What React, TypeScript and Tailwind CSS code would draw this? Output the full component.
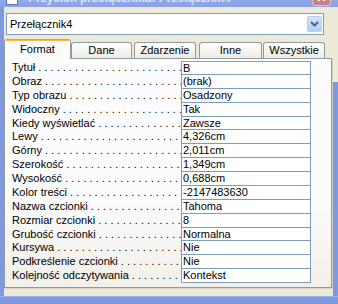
const rows: [string, string][] = [
  ["Tytuł", "B"],
  ["Obraz", "(brak)"],
  ["Typ obrazu", "Osadzony"],
  ["Widoczny", "Tak"],
  ["Kiedy wyświetlać", "Zawsze"],
  ["Lewy", "4,326cm"],
  ["Górny", "2,011cm"],
  ["Szerokość", "1,349cm"],
  ["Wysokość", "0,688cm"],
  ["Kolor treści", "-2147483630"],
  ["Nazwa czcionki", "Tahoma"],
  ["Rozmiar czcionki", "8"],
  ["Grubość czcionki", "Normalna"],
  ["Kursywa", "Nie"],
  ["Podkreślenie czcionki", "Nie"],
  ["Kolejność odczytywania", "Kontekst"],
];

const dots = " . . . . . . . . . . . . . . . . . . . . . . . . . . . . . . . .";

const tabs = [
  { name: "Dane", cls: "w-[61px]" },
  { name: "Zdarzenie", cls: "w-[62px] ml-[2px]" },
  { name: "Inne", cls: "w-[63px] ml-[3px]" },
  { name: "Wszystkie", cls: "w-[62px] ml-[1px]" },
];

export default function App() {
  return (
    <div className="w-[338px] h-[304px] overflow-hidden flex flex-col bg-[#7f99e0] font-['Liberation_Sans',Arial,sans-serif] text-[11px] text-black">
      {/* title bar, mostly scrolled off the top */}
      <div className="h-[22px] mt-[-15px] shrink-0 flex items-center pt-[4px] pl-[6px] pr-[7px] bg-gradient-to-b from-[#9fb4ec] to-[#8aa3e6]">
        <div className="w-[12px] h-[13px] bg-white border border-[#5a74b8] shrink-0" />
        <span className="ml-[10px] text-[12px] font-bold text-[#dbe5f8] whitespace-nowrap">
          Przycisk przełącznika: Przełącznik4
        </span>
        <div className="ml-auto w-[19px] h-[19px] mb-[3px] rounded-[3px] bg-[#c98484] border border-[#e6c2c2] flex items-center justify-center text-white text-[12px] font-bold">
          X
        </div>
      </div>

      <div className="flex flex-1 min-h-0">
        <div className="w-[4px] bg-[#7f99e0]" />
        <div className="w-[329px] bg-[#ece9d8] flex flex-col pt-[6px]">
          {/* object selector */}
          <div className="ml-[2px] w-[318px] h-[22px] border border-[#7f9db9] bg-white flex items-center pl-[3px] pr-[1px]">
            <span className="flex-1">Przełącznik4</span>
            <div className="w-[15px] h-[16px] rounded-[2px] border border-[#b9cdf6] bg-gradient-to-b from-[#d6e2fc] to-[#b6cbf6] flex items-center justify-center">
              <svg width="9" height="6" viewBox="0 0 9 6">
                <path d="M1 1 L4.5 4.5 L8 1" fill="none" stroke="#4d6185" strokeWidth="2" />
              </svg>
            </div>
          </div>

          {/* tabs */}
          <div className="mt-[4px] h-[19px] flex items-end">
            <div className="relative z-10 w-[67px] h-[20px] mb-[-1px] flex flex-col rounded-t-[3px] border-x border-[#919b9c] bg-[#fcfcfe] overflow-hidden">
              <div className="h-[2px] bg-gradient-to-b from-[#e68b2c] to-[#ffc73c]" />
              <div className="flex-1 flex items-center justify-center pb-[2px]">Format</div>
            </div>
            {tabs.map((t) => (
              <div
                key={t.name}
                className={`${t.cls} h-[16px] rounded-t-[3px] border-t border-x border-[#919b9c] bg-gradient-to-b from-white to-[#ecebe6] flex items-center justify-center`}
              >
                {t.name}
              </div>
            ))}
          </div>

          {/* property list */}
          <div className="w-[328px] h-[230px] border border-[#919b9c] bg-gradient-to-b from-[#fcfcfe] from-60% to-[#f1efe8] pt-[2px] shadow-[1px_1px_0_#d6d3c4]">
            {rows.map(([label, value], i) => (
              <div key={label} className="flex h-[13.875px]">
                <div className="w-[176px] pl-[7px] overflow-hidden whitespace-nowrap leading-[13px]">
                  {label}
                  {dots}
                </div>
                <div
                  className={`w-[130px] bg-white border-x border-b border-[#7f9db9] pl-[1px] leading-[12px] whitespace-nowrap ${
                    i === 0 ? "border-t" : ""
                  }`}
                >
                  {value}
                </div>
              </div>
            ))}
          </div>
        </div>
        <div className="flex-1 bg-[linear-gradient(to_bottom,#ece9d8_0px,#ece9d8_75px,#7f99e0_75px)]" />
      </div>

      <div className="h-[8px] shrink-0 bg-[#7f99e0] border-t border-[#9db2ec]" />
    </div>
  );
}
